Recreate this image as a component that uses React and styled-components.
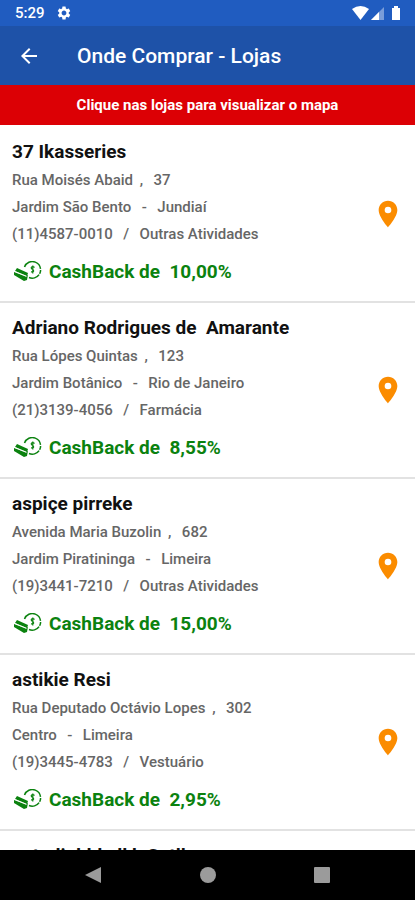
import React from 'react';
import styled, { createGlobalStyle } from 'styled-components';
import { MdArrowBack, MdLocationOn, MdSettings } from 'react-icons/md';

// =======
// DATA
// =======
const stores = [
  {
    id: 1,
    name: '37 Ikasseries',
    street: 'Rua Moisés Abaid',
    number: '37',
    district: 'Jardim São Bento',
    city: 'Jundiaí',
    phone: '(11)4587-0010',
    category: 'Outras Atividades',
    cashback: '10,00%',
  },
  {
    id: 2,
    name: 'Adriano Rodrigues de  Amarante',
    street: 'Rua Lópes Quintas',
    number: '123',
    district: 'Jardim Botânico',
    city: 'Rio de Janeiro',
    phone: '(21)3139-4056',
    category: 'Farmácia',
    cashback: '8,55%',
  },
  {
    id: 3,
    name: 'aspiçe pirreke',
    street: 'Avenida Maria Buzolin',
    number: '682',
    district: 'Jardim Piratininga',
    city: 'Limeira',
    phone: '(19)3441-7210',
    category: 'Outras Atividades',
    cashback: '15,00%',
  },
  {
    id: 4,
    name: 'astikie Resi',
    street: 'Rua Deputado Octávio Lopes',
    number: '302',
    district: 'Centro',
    city: 'Limeira',
    phone: '(19)3445-4783',
    category: 'Vestuário',
    cashback: '2,95%',
  },
  // next store, still under the fold
  { id: 5, name: 'autodi ddda ll b Satll' },
];

// =======
// ICONS
// =======
const StatusIcons = () => (
  <svg width='50' height='16' viewBox='0 0 50 16' fill='#fff' aria-hidden='true'>
    <path d='M1 4Q9.500 -2 18 4L9.500 15Z' />
    <path d='M33 2V15H20Z' opacity='0.4' />
    <path d='M28 7V15H20Z' />
    <path d='M41 3h2V1h4v2h2v12h-8z' />
  </svg>
);

const CashIcon = () => (
  <svg width='28' height='22' viewBox='0 0 28 22' fill='none' aria-hidden='true'>
    <path
      d='M10.500 6A8.300 8.300 0 1 1 15 16.500'
      stroke='#0b820f'
      strokeWidth='1.500'
      strokeDasharray='22 1 4 1 20'
    />
    <path
      d='M20.500 6.500C18.500 4.500 16.500 6 17.500 7.800C20.500 9 20.500 11.500 17 10.800M18.800 4.500V12.500'
      stroke='#0b820f'
      strokeWidth='1.200'
    />
    <path d='M3 7L14 12L13 15L1 10Z' fill='#0b820f' />
    <path d='M0 11L12 15.500L14 13.500L13 19L10 20L0 14Z' fill='#0b820f' />
    <path d='M1 10.500L12.500 15.500' stroke='#fff' strokeWidth='0.700' />
  </svg>
);

const Store = ({ store }) => {
  const { name, street, number, district, city, phone, category, cashback } =
    store;

  return (
    <StoreRow>
      <StoreButton type='button'>
        <StoreInfo>
          <StoreName>{name}</StoreName>
          {street && (
            <>
              <Detail>
                {street} <span>,</span>
                {'  '}
                {number}
              </Detail>
              <Detail>
                {district}
                {'  '}
                <span>-</span>
                {'  '}
                {city}
              </Detail>
              <Detail>
                {phone}
                {'  '}
                <span>/</span>
                {'  '}
                {category}
              </Detail>
              <CashBack>
                <CashIcon />
                <span>{`CashBack de  ${cashback}`}</span>
              </CashBack>
            </>
          )}
        </StoreInfo>
        {street && <MdLocationOn className='pin' />}
      </StoreButton>
    </StoreRow>
  );
};

const App = () => {
  return (
    <>
      <GlobalStyle />
      <Screen>
        <StatusBar>
          <span>5:29</span>
          <MdSettings size={16} />
          <StatusIcons />
        </StatusBar>
        <AppBar>
          <button type='button' aria-label='Voltar'>
            <MdArrowBack size={24} />
          </button>
          <h1>Onde Comprar - Lojas</h1>
        </AppBar>
        <Notice>Clique nas lojas para visualizar o mapa</Notice>
        <StoreList>
          {stores.map((store) => (
            <Store key={store.id} store={store} />
          ))}
        </StoreList>
        <NavBar>
          <button type='button' aria-label='Voltar'>
            <svg width='18' height='18' viewBox='0 0 18 18'>
              <path d='M0 9L16 1V17Z' />
            </svg>
          </button>
          <button type='button' aria-label='Início'>
            <svg width='18' height='18' viewBox='0 0 18 18'>
              <circle cx='9' cy='9' r='8' />
            </svg>
          </button>
          <button type='button' aria-label='Recentes'>
            <svg width='18' height='18' viewBox='0 0 18 18'>
              <rect x='1' y='1' width='16' height='16' rx='1' />
            </svg>
          </button>
        </NavBar>
      </Screen>
    </>
  );
};

// =======
// STYLES
// =======
const GlobalStyle = createGlobalStyle`
  * {
    box-sizing: border-box;
    margin: 0;
    padding: 0;
  }
  body {
    font-family: Roboto, sans-serif;
    background: #fff;
  }
  button {
    font: inherit;
    color: inherit;
    background: none;
    border: none;
    cursor: pointer;
  }
  svg {
    display: block;
    flex-shrink: 0;
  }
`;

const Screen = styled.div`
  display: flex;
  flex-direction: column;
  height: 100vh;
  overflow: hidden;
`;

const StatusBar = styled.div`
  display: flex;
  align-items: center;
  gap: 11px;
  height: 26px;
  padding: 0 14px 0 15px;
  background: #205cc0;
  color: #fff;
  font-size: 15px;
  font-weight: 500;
  svg:last-child {
    margin-left: auto;
  }
`;

const AppBar = styled.header`
  display: flex;
  align-items: center;
  gap: 36px;
  height: 59px;
  padding: 0 17px;
  background: #1e52a8;
  color: #fff;
  h1 {
    font-size: 21px;
    font-weight: 500;
  }
`;

const Notice = styled.p`
  background: #dc0005;
  color: #fff;
  font-size: 15px;
  font-weight: 700;
  line-height: 40px;
  text-align: center;
`;

const StoreList = styled.ul`
  flex: 1;
  min-height: 0;
  padding-top: 2px;
  overflow: hidden;
  list-style: none;
`;

const StoreRow = styled.li`
  border-bottom: 2px solid #e2e2e2;
`;

const StoreButton = styled.button`
  display: flex;
  align-items: center;
  justify-content: space-between;
  width: 100%;
  padding: 11px 11px 15px 12px;
  text-align: left;
  .pin {
    width: 32px;
    height: 32px;
    margin-top: 4px;
    color: #fb8c00;
  }
`;

const StoreInfo = styled.div`
  white-space: pre;
`;

const StoreName = styled.h2`
  color: #111;
  font-size: 19px;
  font-weight: 700;
  line-height: 28px;
  margin-bottom: 1px;
`;

const Detail = styled.p`
  color: #666;
  font-size: 15px;
  font-weight: 500;
  line-height: 27px;
  span {
    margin: 0 3px;
  }
`;

const CashBack = styled.p`
  display: flex;
  align-items: center;
  gap: 7px;
  margin-top: 10px;
  padding-left: 2px;
  color: #0b820f;
  font-size: 19px;
  font-weight: 700;
  line-height: 28px;
`;

const NavBar = styled.nav`
  display: flex;
  align-items: center;
  justify-content: center;
  gap: 96px;
  height: 50px;
  background: #000;
  svg {
    fill: #9b9b9b;
  }
`;

export default App;
